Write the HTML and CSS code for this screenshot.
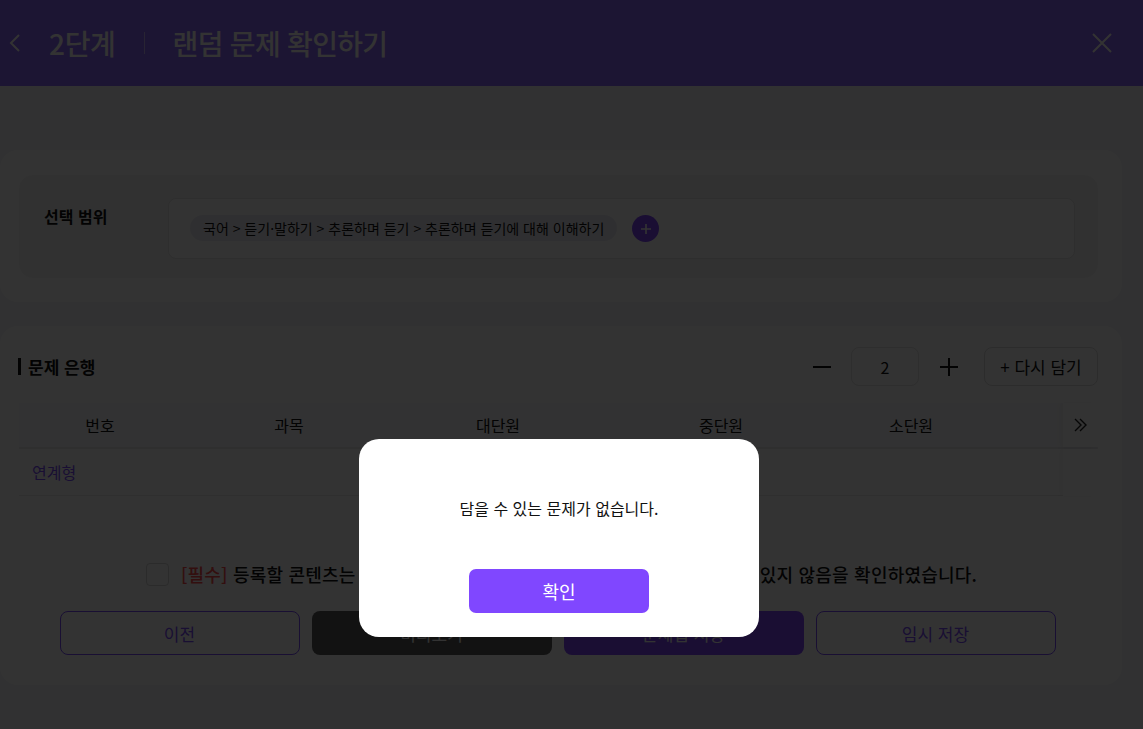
FILE: index.html
```html
<!DOCTYPE html>
<html lang="ko">
<head>
<meta charset="utf-8">
<title>랜덤 문제 확인하기</title>
<link rel="stylesheet" href="styles.css">
</head>
<body>
<header class="topbar">
  <svg class="back" width="16" height="20" viewBox="0 0 16 20"><path d="M12 2 L4 10 L12 18" fill="none" stroke="#fff" stroke-width="2"/></svg>
  <span class="step">2단계</span>
  <span class="divider"></span>
  <span class="title">랜덤 문제 확인하기</span>
  <svg class="close" width="22" height="22" viewBox="0 0 22 22"><path d="M2 2 L20 20 M20 2 L2 20" fill="none" stroke="#fff" stroke-width="2"/></svg>
</header>

<main class="page">
  <section class="card card-range">
    <div class="range-box">
      <div class="range-label">선택 범위</div>
      <div class="range-input">
        <span class="chip">국어 &gt; 듣기·말하기 &gt; 추론하며 듣기 &gt; 추론하며 듣기에 대해 이해하기</span>
        <span class="add-btn"><svg width="12" height="12" viewBox="0 0 12 12"><path d="M6 1 V11 M1 6 H11" stroke="#fff" stroke-width="1.6"/></svg></span>
      </div>
    </div>
  </section>

  <section class="card card-bank">
    <div class="bank-head">
      <h2 class="bank-title">문제 은행</h2>
      <div class="controls">
        <svg class="ctl-icon" width="20" height="20" viewBox="0 0 20 20"><path d="M1 10 H19" stroke="#111" stroke-width="2"/></svg>
        <div class="count">2</div>
        <svg class="ctl-icon" width="20" height="20" viewBox="0 0 20 20"><path d="M1 10 H19 M10 1 V19" stroke="#111" stroke-width="2"/></svg>
        <button class="reload">+ 다시 담기</button>
      </div>
    </div>

    <div class="table">
      <div class="thead">
        <div class="th">번호</div>
        <div class="th">과목</div>
        <div class="th">대단원</div>
        <div class="th">중단원</div>
        <div class="th">소단원</div>
        <div class="th"></div>
        <div class="th more"><svg width="16" height="14" viewBox="0 0 16 14"><path d="M2 1 L8 7 L2 13 M7 1 L13 7 L7 13" fill="none" stroke="#222" stroke-width="1.4"/></svg></div>
      </div>
      <div class="trow">
        <div class="group">연계형</div>
        <div class="sticky-cell"></div>
      </div>
    </div>

    <label class="agree">
      <span class="checkbox"></span>
      <span class="agree-text"><span class="req">[필수]</span> 등록할 콘텐츠는 저작권 등 제3자의 권리를 침해하는 내용이 포함되어 있지 않음을 확인하였습니다.</span>
    </label>

    <div class="actions">
      <button class="btn btn-outline">이전</button>
      <button class="btn btn-dark">미리보기</button>
      <button class="btn btn-primary">문제집 저장</button>
      <button class="btn btn-outline">임시 저장</button>
    </div>
  </section>
</main>

<div class="overlay">
  <div class="modal">
    <p class="modal-msg">담을 수 있는 문제가 없습니다.</p>
    <button class="modal-ok">확인</button>
  </div>
</div>
</body>
</html>
```

FILE: styles.css
```css
* { box-sizing: border-box; }
html, body { margin: 0; padding: 0; }
body {
  font-family: "Noto Sans CJK KR", "Noto Sans", sans-serif;
  background: #f2f4f8;
  color: #111;
  width: 1143px;
  height: 729px;
  overflow: hidden;
  position: relative;
}
button { font-family: inherit; cursor: pointer; }

.topbar {
  height: 86px;
  background: #8c68ff;
  display: flex;
  align-items: center;
  padding-left: 7px;
  color: #fff;
}
.back { margin-right: 26px; }
.step { font-size: 28px; font-weight: 500; letter-spacing: -0.3px; }
.divider { width: 1px; height: 22px; background: rgba(255,255,255,0.5); margin: 0 28px; }
.title { font-size: 28px; font-weight: 500; letter-spacing: -0.7px; }
.close { margin-left: auto; margin-right: 30px; }

.page {
  padding: 64px 21px 0 0;
  display: flex;
  flex-direction: column;
  gap: 24px;
}
.card {
  background: #fff;
  border-radius: 18px;
}
.card-range { padding: 25px 24px 24px 19px; }
.range-box {
  background: #f6f6f6;
  border-radius: 14px;
  padding: 23px 23px 19px 25px;
  display: flex;
  align-items: flex-start;
}
.range-label {
  width: 124px;
  font-size: 16px;
  font-weight: 700;
  padding-top: 6px;
  line-height: 24px;
}
.range-input {
  flex: 1;
  height: 61px;
  border: 1px solid #e3e3e3;
  border-radius: 8px;
  background: #fff;
  display: flex;
  align-items: flex-start;
  padding: 16px 21px 0;
  gap: 15px;
}
.chip {
  height: 26px;
  line-height: 26px;
  padding: 0 13px;
  border-radius: 13px;
  background: #ececf4;
  font-size: 14px;
  color: #111;
}
.add-btn {
  width: 27px;
  height: 27px;
  border-radius: 50%;
  background: #8047ff;
  display: flex;
  align-items: center;
  justify-content: center;
}

.card-bank { padding: 21px 24px 30px 19px; height: 359px; }
.bank-head { display: flex; align-items: center; height: 39px; }
.bank-title {
  margin: 0 0 0 -1px;
  font-size: 17px;
  font-weight: 700;
  display: flex;
  align-items: center;
}
.bank-title::before {
  content: "";
  width: 3px;
  height: 17px;
  background: #111;
  margin-right: 7px;
}
.controls { margin-left: auto; display: flex; align-items: center; }
.ctl-icon { margin: 0 10px; }
.count {
  width: 68px;
  height: 39px;
  border: 1px solid #e3e3e3;
  border-radius: 8px;
  display: flex;
  align-items: center;
  justify-content: center;
  font-size: 16px;
  margin: 0 10px 0 9px;
}
.reload {
  margin-left: 15px;
  width: 114px;
  height: 39px;
  border: 1px solid #dcdcdc;
  border-radius: 8px;
  background: #fff;
  font-size: 17px;
  color: #111;
  padding: 0;
}

.table { margin-top: 17px; }
.thead {
  display: grid;
  grid-template-columns: 162px 216px 202px 244px 136px 84px 35px;
  height: 46px;
  background: #fafafc;
  border-bottom: 2px solid #e8e8ec;
}
.th {
  display: flex;
  align-items: center;
  justify-content: center;
  font-size: 16px;
  color: #111;
}
.th.more { background: #fff; box-shadow: -3px 0 4px rgba(0,0,0,0.04); }
.trow {
  display: flex;
  height: 47px;
}
.group {
  flex: 1;
  display: flex;
  align-items: center;
  padding-left: 13px;
  color: #7c4dff;
  font-size: 16px;
  border-bottom: 1px solid #e8e8e8;
}
.sticky-cell { width: 35px; background: #fff; box-shadow: -3px 0 4px rgba(0,0,0,0.04); }

.agree {
  margin-top: 65px;
  display: flex;
  align-items: center;
  justify-content: center;
  gap: 12px;
  padding-left: 6px;
}
.checkbox {
  width: 23px;
  height: 23px;
  border: 1px solid #d4d4d4;
  border-radius: 4px;
  background: #fff;
}
.agree-text { font-size: 18px; font-weight: 500; letter-spacing: 0.2px; }
.req { color: #ff4a4a; }

.actions {
  margin-top: 24px;
  display: flex;
  justify-content: center;
  gap: 12px;
  padding-right: 2px;
}
.btn {
  width: 240px;
  height: 44px;
  border-radius: 8px;
  font-size: 17px;
  padding: 0;
}
.btn-outline { background: #fff; border: 1px solid #7c4dff; color: #7c4dff; }
.btn-dark { background: #5c5c5c; border: none; color: #fff; }
.btn-primary { background: #8047ff; border: none; color: #fff; }

.overlay {
  position: absolute;
  inset: 0;
  background: rgba(0,0,0,0.8);
}
.modal {
  position: absolute;
  left: 359px;
  top: 439px;
  width: 400px;
  height: 198px;
  background: #fff;
  border-radius: 20px;
  display: flex;
  flex-direction: column;
  align-items: center;
  padding-top: 57px;
}
.modal-msg {
  margin: 0;
  font-size: 16px;
  line-height: 24px;
  color: #111;
}
.modal-ok {
  margin-top: 49px;
  width: 180px;
  height: 44px;
  border: none;
  border-radius: 7px;
  background: #8047ff;
  color: #fff;
  font-size: 18px;
  padding: 0;
}
```
